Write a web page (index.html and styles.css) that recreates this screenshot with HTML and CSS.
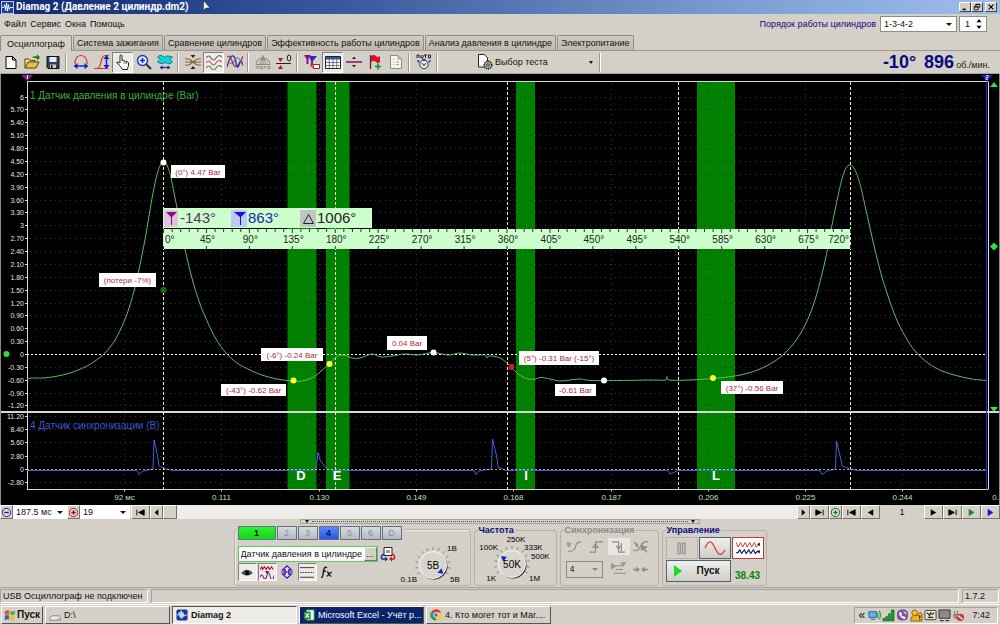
FILE: index.html
```html
<!DOCTYPE html>
<html lang="ru">
<head>
  <meta charset="UTF-8">
  <meta name="viewport" content="width=device-width, initial-scale=1.0">
  <title>Diamag 2</title>
  <link rel="stylesheet" href="styles.css">
</head>
<body>
  <header class="titlebar">
    <svg class="app-icon" viewBox="0 0 14 14"><rect x="0.5" y="0.5" width="13" height="13" fill="#1c3f9c" stroke="#c8d4f4"/><path d="M1 7h2l1-3 1 6 1-8 1 9 1-7 1 5 1-2h3" fill="none" stroke="#fff"/></svg>
    <h1>Diamag 2 (Давление 2 цилиндр.dm2)</h1>
    <div class="window-buttons">
      <button aria-label="Свернуть"><svg viewBox="0 0 10 10"><path d="M2 8h4" stroke="#000" stroke-width="2"/></svg></button>
      <button aria-label="Восстановить"><svg viewBox="0 0 10 10"><path d="M3.5 4V1.5h5v4H7M1.5 4.5h5v4h-5zM1.5 5h5M3.5 2h5" fill="none" stroke="#000"/></svg></button>
      <button class="close" aria-label="Закрыть"><svg viewBox="0 0 10 10"><path d="M2 2l6 6M8 2l-6 6" stroke="#000" stroke-width="1.4"/></svg></button>
    </div>
    <svg class="pointer" viewBox="0 0 8 12"><path d="M0.5 0.5v10l2.500-2.500h4z" fill="#fff" stroke="#222" stroke-width="0.6"/></svg>
  </header>

  <div class="menubar">
    <nav class="menu">
      <a href="#">Файл</a><a href="#">Сервис</a><a href="#">Окна</a><a href="#">Помощь</a>
    </nav>
    <label class="order-label" for="order">Порядок работы цилиндров</label>
    <span class="select order"><select id="order"><option>1-3-4-2</option></select></span>
    <span class="spin">
      <input type="text" value="1" aria-label="Номер цилиндра">
      <svg viewBox="0 0 6 12"><path d="M0 4l3-4 3 4zM0 8l3 4 3-4z"/></svg>
    </span>
  </div>

  <div class="tabs">
    <button class="tab active">Осциллограф</button>
    <button class="tab">Система зажигания</button>
    <button class="tab">Сравнение цилиндров</button>
    <button class="tab">Эффективность работы цилиндров</button>
    <button class="tab">Анализ давления в цилиндре</button>
    <button class="tab">Электропитание</button>
  </div>

  <div class="toolbar">
    <button aria-label="Новый"><svg viewBox="0 0 16 16"><path d="M3 2.500h6.500L13 6v8.500H3zM9.500 2.500V6H13" fill="#fff" stroke="#000"/></svg></button>
    <button aria-label="Открыть"><svg viewBox="0 0 16 16"><path d="M1 14V5h4l1 1.500h5V9" fill="#ffe38a" stroke="#554400"/><path d="M1 14l3-6h11l-3 6z" fill="#e8c050" stroke="#554400"/><path d="M8 4q2-3 5-1.500V0l3 3.500-3 3V4.500q-3-1-5-.5z" fill="#0a8a1a"/></svg></button>
    <button aria-label="Сохранить"><svg viewBox="0 0 16 16"><path d="M2 2.500h12v12H3l-1-1z" fill="#33415f" stroke="#111"/><path d="M4.500 3h7v5h-7z" fill="#e4ecf8"/><path d="M5 10.500h6V14H5z" fill="#c8ccd0"/><path d="M6 11h1.500v3H6z" fill="#111"/></svg></button>
    <i class="sep"></i>
    <button aria-label="Растянуть по времени"><svg viewBox="0 0 16 16"><path d="M2 10V8Q3 1.500 8 1.500T14 8v2" fill="none" stroke="#e03030" stroke-width="1.200"/><path d="M4 12h8" stroke="#1020c0" stroke-width="1.400"/><path d="M0.500 12l4-3v6zM15.500 12l-4-3v6z" fill="#1020c0"/></svg></button>
    <button aria-label="Растянуть по амплитуде"><svg viewBox="0 0 16 16"><path d="M0 14.500h3Q6 14 7 8t4-6.500h4M3 14.500h11" fill="none" stroke="#e03030" stroke-width="1.200"/><path d="M12.500 4v8" stroke="#1020c0" stroke-width="1.500"/><path d="M12.500 1l3 4h-6zM12.500 15l3-4h-6z" fill="#1020c0"/></svg></button>
    <button class="pressed" aria-label="Рука"><svg viewBox="0 0 16 16"><path d="M5 9V2q0-1 1-1t1 1v4.500q1.500-.8 2 .5 1.500-.5 2 .7 2-.5 2.500 1.300V12q-1 1-1 3.500H7.500Q6.500 13 1.500 8.500q.5-1.500 3.500.5z" fill="#fff" stroke="#111" stroke-width="0.900"/><path d="M9 7.500v2M11 8v2" stroke="#111" stroke-width="0.700"/></svg></button>
    <button aria-label="Масштаб"><svg viewBox="0 0 16 16"><path d="M10 10l5 5" stroke="#333" stroke-width="2.200"/><circle cx="6.500" cy="6.500" r="5" fill="#dff0ff" stroke="#2038b0" stroke-width="1.400"/><path d="M4 6.500h5M6.500 4v5" stroke="#1020c0" stroke-width="1.500"/></svg></button>
    <button aria-label="Наложение"><svg viewBox="0 0 16 16"><path d="M0.500 3Q3 0 5.500 2T8 3t2.500-1 5 1L13 5.500 15.500 8Q13 11 10.500 9.500T8 8.500t-2.500 1-5-1.500L3 5.500z" fill="#18d0d8" stroke="#087880" stroke-width="0.900"/><path d="M5 13.500h6" stroke="#10308a" stroke-width="1.200"/><path d="M2.500 13.500l3-2v4zM13.500 13.500l-3-2v4z" fill="#10308a"/></svg></button>
    <i class="sep"></i>
    <button aria-label="Совместить"><svg viewBox="0 0 16 16"><path d="M0 5q4-1 8 3t8 3M0 11q4 1 8-3t8-3M0 8h16" fill="none" stroke="#8a6236" stroke-width="1.100"/><path d="M5.500 1h5L8 4zM5.500 15h5L8 12z" fill="#222"/></svg></button>
    <button class="pressed" aria-label="Раздельно"><svg viewBox="0 0 16 16"><path d="M0 4q2.500-4 5 0t5 0 6-1" fill="none" stroke="#666" stroke-width="1.200"/><path d="M0 9q2.500-4 5 0t5 0 6-1" fill="none" stroke="#d85050" stroke-width="1.200"/><path d="M0 14q2.500-4 5 0t5 0 6-1" fill="none" stroke="#4a8a58" stroke-width="1.200"/></svg></button>
    <button aria-label="Вместе"><svg viewBox="0 0 16 16"><path d="M0 3q3-3 5 4t5 5 6-10" fill="none" stroke="#d82030" stroke-width="1.300"/><path d="M0 13q3-12 6-11 2 0 3 7 1 7 3 2 2-8 4 1" fill="none" stroke="#2030d0" stroke-width="1.300"/><path d="M1 7q4 6 7-1t8 6" fill="none" stroke="#5a7080"/></svg></button>
    <i class="sep"></i>
    <button aria-label="Авто" disabled><svg viewBox="0 0 16 16"><path d="M1 11a7 7 0 1 1 14 0M8 2v8M5 10l3-8 3 8M1 10.500h14" fill="none" stroke="#8c8a84" stroke-width="1.100"/><path d="M2 15v-3h2v3M6 12v3h1.500v-3M9 12.500h2.500M10.300 12.500V15M13 12.500h2v2h-2z" fill="none" stroke="#8c8a84" stroke-width="0.900"/></svg></button>
    <button aria-label="Обнулить"><svg viewBox="0 0 16 16"><path d="M0 9.500h15" stroke="#222"/><path d="M2 4h5L4.500 8z" fill="#c01818"/><path d="M2 15h5l-2.500-4z" fill="#c01818"/><ellipse cx="13" cy="4" rx="1.800" ry="3" fill="none" stroke="#222"/></svg></button>
    <i class="sep"></i>
    <button aria-label="Маркеры"><svg viewBox="0 0 16 16"><path d="M0 1h7L4.500 5v5h-2V5z" fill="#8a1090"/><path d="M5 2h8L9 7v4H7V7z" fill="#2030c8"/><path d="M8 7q-2 6 1 6" fill="none" stroke="#d02030" stroke-width="1.400"/><path d="M9.500 10.500h6v4h-6z" fill="#fff" stroke="#a02030"/></svg></button>
    <button class="pressed" aria-label="Таблица"><svg viewBox="0 0 16 16"><path d="M0.500 2.500h15v12H.5z" fill="#fff" stroke="#223"/><path d="M1 3h14v2.500H1z" fill="#3458a8"/><path d="M4.300 3v11M8 3v11M11.700 3v11M1 8.500h14M1 11.500h14" stroke="#445" stroke-width="0.700"/></svg></button>
    <button aria-label="Граница"><svg viewBox="0 0 16 16"><path d="M0 8h16" stroke="#8a1870" stroke-width="1.600"/><path d="M6 5l2-2.500L10 5zM6 11l2 2.500 2-2.500z" fill="#222"/></svg></button>
    <button aria-label="Флаг"><svg viewBox="0 0 16 16"><path d="M3.500 1v14" stroke="#333" stroke-width="1.300"/><path d="M4 2q3-2 5 0t4 0v6q-2 2-4 0T4 8z" fill="#d81020"/><path d="M8 12.500h6M11 9.500v6" stroke="#149020" stroke-width="1.600"/></svg></button>
    <button aria-label="Отчёт"><svg viewBox="0 0 16 16"><path d="M2.500 1.500H10L13.500 5v9.500h-11z" fill="#f4f4f0" stroke="#8c8a84"/><path d="M10 1.500V5h3.500" fill="none" stroke="#8c8a84"/><path d="M5 5.500h1M5 8h1M5 10.500h1M8 8h3M8 10.500h3" stroke="#a8a6a0"/></svg></button>
    <i class="sep"></i>
    <button aria-label="Автонастройка"><svg viewBox="0 0 16 16"><path d="M1 4V1h2v3M5 1v3h2V1M8 1h3M9.500 1v3M12.500 1h2v3h-2z" fill="none" stroke="#222"/><circle cx="8" cy="10.500" r="4.200" fill="#e8eef4" stroke="#333"/><path d="M6 9l2 3 2-3" fill="none" stroke="#333"/><path d="M1 6l3 1-2 2zM15 6l-3 1 2 2zM6 5h4L8 7z" fill="#2030b8"/></svg></button>
    <i class="sep"></i>
    <button class="test-pick">
      <svg viewBox="0 0 16 16"><path d="M1.500.5h6L10.500 4v9h-9z" fill="#fff" stroke="#222"/><circle cx="11" cy="11" r="3.800" fill="#bbb" stroke="#222" stroke-dasharray="1.500 0.700" stroke-width="1.500"/><circle cx="11" cy="11" r="1.300" fill="#fff" stroke="#222"/></svg>
      <span>Выбор теста</span>
      <i class="caret"></i>
    </button>
    <i class="sep"></i>
    <div class="readout"><b>-10°</b><b>896</b><span>об./мин.</span></div>
  </div>

  <svg class="scope" id="scope" viewBox="0 74 1000 431" role="img" aria-label="Осциллограмма"></svg>

  <div class="timebar">
    <button aria-label="Уменьшить"><svg viewBox="0 0 12 12"><circle cx="6" cy="6" r="4.500" fill="#d8d8f0" stroke="#202060"/><path d="M3.500 6h5" stroke="#202060" stroke-width="1.500"/></svg></button>
    <span class="select span"><select aria-label="Длительность"><option>187.5 мс</option></select></span>
    <button aria-label="Увеличить"><svg viewBox="0 0 12 12"><circle cx="6" cy="6" r="4.500" fill="#f8e0e0" stroke="#802020"/><path d="M3.500 6h5M6 3.500v5" stroke="#901010" stroke-width="1.500"/></svg></button>
    <span class="select zoom"><select aria-label="Масштаб"><option>19</option></select></span>
    <button class="wide" aria-label="В начало"><svg viewBox="0 0 12 12"><path d="M2 3v6M10 3v6L4 6z" fill="#000" stroke="#000"/></svg></button>
    <button aria-label="Влево"><svg viewBox="0 0 12 12"><path d="M8 2.500v7L4 6z"/></svg></button>
    <div class="track"><i class="thumb"></i></div>
    <button aria-label="Вправо"><svg viewBox="0 0 12 12"><path d="M4 2.500v7L8 6z"/></svg></button>
    <button class="wide" aria-label="В конец"><svg viewBox="0 0 12 12"><path d="M10 3v6M2 3v6l6-3z" fill="#000" stroke="#000"/></svg></button>
    <button aria-label="Добавить"><svg viewBox="0 0 12 12"><circle cx="6" cy="6" r="4.500" fill="#e0f0e0" stroke="#205020"/><path d="M3.500 6h5M6 3.500v5" stroke="#108010" stroke-width="1.500"/></svg></button>
    <button class="wide" aria-label="Первый кадр"><svg viewBox="0 0 12 12"><path d="M2 3v6M10 3v6L4 6z" fill="#000" stroke="#000"/></svg></button>
    <button class="wide" aria-label="Предыдущий кадр"><svg viewBox="0 0 12 12"><path d="M9 2.500v7L3 6z"/></svg></button>
    <output>1</output>
    <button class="wide" aria-label="Следующий кадр"><svg viewBox="0 0 12 12"><path d="M3 2.500v7L9 6z"/></svg></button>
    <button class="wide" aria-label="Последний кадр"><svg viewBox="0 0 12 12"><path d="M10 3v6M2 3v6l6-3z" fill="#000" stroke="#000"/></svg></button>
    <button class="wide" aria-label="Воспроизвести"><svg viewBox="0 0 12 12"><path d="M3 2v8l6-4z" fill="#0a9020"/></svg></button>
    <button class="wide" aria-label="Воспроизвести всё"><svg viewBox="0 0 12 12"><path d="M3 2v8l6-4z" fill="#1010e0"/></svg></button>
  </div>

  <main class="panel">
    <div class="splitter"><i class="caret"></i><i class="dots"></i><i class="caret"></i></div>
    <div class="groups">
      <section class="group channel" aria-label="Канал">
        <div class="channel-tabs">
          <button class="ch one">1</button><button class="ch">2</button><button class="ch">3</button><button class="ch four">4</button><button class="ch">5</button><button class="ch">6</button><button class="ch">D</button>
        </div>
        <div class="channel-body">
          <div class="channel-left">
            <div class="sensor-row">
              <span class="sensor"><input type="text" value="Датчик давления в цилиндре" aria-label="Датчик"><button aria-label="Выбрать датчик">...</button></span>
              <button class="flat" aria-label="Переключить датчик"><svg viewBox="0 0 16 16"><path d="M4 1.500h8v8H4z" fill="#fff" stroke="#222"/><path d="M6 4h4v3H6z" fill="#999"/><path d="M4 8q-4 2-2 5h3" fill="none" stroke="#1828b0" stroke-width="1.400"/><path d="M5 10.500l3 2.500-3 2.500z" fill="#1828b0"/><path d="M12 8q4 2 2 5h-3" fill="none" stroke="#d01818" stroke-width="1.400"/><path d="M12 10.500L9 13l3 2.500z" fill="#d01818"/></svg></button>
            </div>
            <div class="mode-row">
              <button class="pressed" aria-label="Показать"><svg viewBox="0 0 16 16"><path d="M2 9q6-6 12 0-6 5-12 0z" fill="#666" stroke="#222"/><circle cx="8" cy="9" r="2.500"/></svg></button>
              <button class="pressed" aria-label="Фильтр"><svg viewBox="0 0 16 16"><path d="M0 5l2-3 1 3 2-3 2 3 2-3 2 3 2-3 2 3" fill="none" stroke="#b01040" stroke-width="1.300"/><path d="M5.500 7h5L8 10z" fill="#222"/><path d="M0 14q2-5 4 0t4-2 4 2 4-2" fill="none" stroke="#801090" stroke-width="1.200"/></svg></button>
              <button aria-label="Инверсия"><svg viewBox="0 0 16 16"><path d="M8 1l5 4.500h-3v5h3L8 15l-5-4.500h3v-5H3z" fill="#e8dcf0" stroke="#2020b8" stroke-width="1.400"/><path d="M1.500 8h13" stroke="#a01070" stroke-width="1.400"/></svg></button>
              <button class="pressed" aria-label="Линии"><svg viewBox="0 0 16 16"><path d="M0 3h16M0 14h16" stroke="#222"/><path d="M0 8.500h16" stroke="#222" stroke-dasharray="2 1"/></svg></button>
              <button class="fx" aria-label="Функция"><svg viewBox="0 0 16 16"><path d="M8 3q-2.500-1.500-3.500 2L3 13q-.5 1.500-2 1M3 7h4M8 8q2 0 2.500 2.500T13 13M13.500 8Q11 9 8 13" fill="none" stroke="#111" stroke-width="1.500"/></svg></button>
            </div>
          </div>
          <svg class="knob volt" id="knob-volt" viewBox="-34 -24 68 42"></svg>
        </div>
      </section>

      <fieldset class="group freq">
        <legend>Частота</legend>
        <svg class="knob rate" id="knob-rate" viewBox="-34 -30 76 48"></svg>
      </fieldset>

      <fieldset class="group sync" disabled>
        <legend>Синхронизация</legend>
        <div class="sync-grid">
          <button aria-label="По сигналу"><svg viewBox="0 0 16 16"><path d="M1 13h3Q8 13 9 8t6-5M1 3v4M0 5l2 3 2-3z" fill="none" stroke="#8c8a84" stroke-width="1.200"/></svg></button>
          <button aria-label="По фронту"><svg viewBox="0 0 16 16"><path d="M1 14h6V3h8M7 5L4.500 9h5z" fill="none" stroke="#8c8a84" stroke-width="1.200"/></svg></button>
          <button class="lit" aria-label="По спаду"><svg viewBox="0 0 16 16"><path d="M1 3h7v11h7M8 11L5.500 7M8 11l2.500-4M11 4v9" fill="none" stroke="#8c8a84" stroke-width="1.200"/></svg></button>
          <button aria-label="Без синхронизации"><svg viewBox="0 0 16 16"><path d="M0 12q5 2 8-4t8-5" fill="none" stroke="#8c8a84" stroke-width="1.200"/><path d="M1 3l4 3v3zM9 5l2 3 4 .5-3 1.500 3 4-4-3-2 1z" fill="#8c8a84" stroke="#8c8a84"/></svg></button>
          <span class="select sync-ch"><select aria-label="Канал синхронизации"><option>4</option></select></span>
          <button aria-label="Уровень"><svg viewBox="0 0 16 16"><path d="M0 4h9l4 0M3 12h13M5 8h8M11 1h4l-2 3zM1 2v5l3-2.500z" fill="none" stroke="#8c8a84" stroke-width="1.200"/></svg></button>
          <button aria-label="Сжать"><svg viewBox="0 0 16 16"><path d="M0 8h5M16 8h-5" stroke="#8c8a84" stroke-width="1.600"/><path d="M3.500 5v6L7.500 8zM12.500 5v6l-4-3z" fill="#8c8a84"/></svg></button>
        </div>
      </fieldset>

      <fieldset class="group control">
        <legend>Управление</legend>
        <div class="control-grid">
          <button class="pause" aria-label="Пауза" disabled><svg viewBox="0 0 32 22"><path d="M11.500 5.500h3v12h-3zM16.500 5.500h3v12h-3z" fill="#c0beb8" stroke="#8c8a84"/></svg></button>
          <button class="raised" aria-label="Одиночный"><svg viewBox="0 0 32 22"><path d="M5 11C9 2 12 2 16 11s7 9 11 2" fill="none" stroke="#d03030" stroke-width="1.200"/></svg></button>
          <button class="selected" aria-label="Непрерывный"><svg viewBox="0 0 32 22"><path d="M3 5l2 5 3-5 2 5 3-5 2 5 3-5 2 5 3-5 2 5 3-3" fill="none" stroke="#c02828"/><path d="M3 16h2l2-3 2 4 3-4 2 4 3-4 2 4 3-4 2 4 3-3" fill="none" stroke="#182060" stroke-width="1.300"/><path d="M26 7l3-2v4zM26 15l3-2v4z" fill="#111"/></svg></button>
          <button class="raised start"><svg viewBox="0 0 10 14"><path d="M1 1v12l8-6z" fill="#10e020"/></svg>Пуск</button>
          <output class="fps">38.43</output>
        </div>
      </fieldset>
    </div>
  </main>

  <footer class="statusbar">
    <span class="status-text">USB Осциллограф не подключен</span>
    <span class="status-fill"></span>
    <span class="version">1.7.2</span>
  </footer>

  <div class="taskbar">
    <button class="task start-menu"><svg viewBox="0 0 14 14"><path d="M1 2.500q3-2 5.500-.5L6 6.500q-2.500-1-5 .5z" fill="#e85020"/><path d="M7.500 2.500q2.500 1 5.500-.5l-.5 4.500q-2.500 1.500-5 .5z" fill="#50b030"/><path d="M1 8q2.500-1.500 5-.5l-.5 5q-2-1-4.500.5z" fill="#3060d0"/><path d="M7 8q2.500 1 5 0l-.5 4.500q-2.500 1.500-5 .5z" fill="#f0c020"/></svg>Пуск</button>
    <button class="task"><svg viewBox="0 0 14 14"><path d="M1 10l3-2h8l1.500 2v3H1z" fill="#eee" stroke="#777"/><path d="M10 11.500h2" stroke="#20a020"/></svg>D:\</button>
    <button class="task current"><svg viewBox="0 0 14 14"><rect x="0.500" y="0.500" width="13" height="13" rx="2" fill="#123a9c"/><path d="M1 7h2l1-3 1 6 1-8 1 9 1-7 1 5 1-2h3" fill="none" stroke="#fff"/></svg>Diamag 2</button>
    <button class="task alert"><svg viewBox="0 0 14 14"><path d="M4 1h9v12H4z" fill="#f4faf4" stroke="#2a8a40"/><path d="M1 3h8v9H1z" fill="#1f8a3c"/><path d="M3 5l4 5M7 5l-4 5" stroke="#fff" stroke-width="1.400"/></svg><span>Microsoft Excel - Учёт р...</span></button>
    <button class="task"><svg viewBox="0 0 14 14"><path d="M7 7L1.400 3.500A6.500 6.500 0 0 1 12.800 4H7z" fill="#e03a2c"/><path d="M7 7l5.800-3A6.500 6.500 0 0 1 7 13.500z" fill="#f8cc20"/><path d="M7 7v6.500A6.500 6.500 0 0 1 1.400 3.500z" fill="#20a050"/><circle cx="7" cy="7" r="2.800" fill="#3a78e8" stroke="#fff"/></svg><span>4. Кто могет тот и Маг....</span></button>
    <div class="tray">
      <span>«</span>
      <svg viewBox="0 0 14 14"><path d="M1 3h8v6H1zM3 11h5" fill="#60b8f0" stroke="#305880"/><path d="M10 4q2 3 0 6M12 2q3 5 0 9" fill="none" stroke="#20a030" stroke-width="1.200"/></svg>
      <svg viewBox="0 0 14 14"><path d="M1 10h2v3H1zM4 8h2v5H4zM7 5h2v8H7zM10 1h3v12h-3z" fill="#10a020" stroke="#064a0c" stroke-width="0.500"/></svg>
      <svg viewBox="0 0 14 14"><rect x="1" y="0.500" width="12" height="12" rx="5" fill="#7b519d"/><path d="M4 3.500q-1 3 1.500 5t4 2l.5-1.500-2-1-1 .5-1.500-2 .8-1-1-2zM8 3q3 0 3 3" fill="#fff" stroke="#fff" stroke-width="0.600"/></svg>
      <svg viewBox="0 0 14 14"><circle cx="5" cy="4" r="3" fill="#f0c040" stroke="#8a6410"/><path d="M1 12q0-5 4-5h4v-2q2-3 4 0v8H1z" fill="#f0b020" stroke="#8a6410"/><path d="M10.500 7v3M10.500 11v1" stroke="#222" stroke-width="1.400"/></svg>
      <svg viewBox="0 0 14 14"><rect x="1" y="1.500" width="12" height="10" rx="1" fill="#f0ecc8" stroke="#333"/><path d="M3 4l3 3 1-3 2 2 2-2M4 9h6" fill="none" stroke="#222" stroke-width="1.200"/></svg>
      <svg viewBox="0 0 14 14"><path d="M1 1h12v9H1z" fill="#8a8a8a" stroke="#333"/><path d="M2 12.500h4M8 12.500h4" stroke="#333" stroke-width="1.500"/></svg>
      <svg viewBox="0 0 14 14"><path d="M3 2v4M6 2v4M2 6h6v3q-3 3-6 0z" fill="#999" stroke="#777"/><circle cx="9" cy="9" r="4" fill="#d83030"/><path d="M6.500 7l5 4" stroke="#fff" stroke-width="1.500"/></svg>
      <time>7:42</time>
    </div>
  </div>
  <script src="script.js"></script>
</body>
</html>
```
FILE: styles.css
```css
:root {
  --face: #d4d0c8;
  --shade: #808080;
  --navy: #0a0a80;
}

* {
  box-sizing: border-box;
}

body {
  margin: 0;
  min-height: 100vh;
  display: flex;
  flex-direction: column;
  background: var(--face);
  color: #111;
  font: 9px/12px "Liberation Sans", Arial, sans-serif;
}

button,
input,
select {
  font: inherit;
  color: inherit;
  margin: 0;
  padding: 0;
  border: 0;
  border-radius: 0;
  background: none;
}

button {
  display: flex;
  align-items: center;
  justify-content: center;
}

svg {
  display: block;
  flex: none;
}

/* title bar */
.titlebar {
  position: relative;
  height: 14px;
  display: flex;
  align-items: center;
  padding: 0 3px 0 1px;
  background: linear-gradient(90deg, #0f2a72, #3a5a9e 35%, #7da0d4 75%, #9dbdec);
  color: #fff;
}

.app-icon {
  width: 13px;
  height: 13px;
}

.titlebar h1 {
  flex: 1;
  margin: 0 0 0 2px;
  font-family: Roboto, "Liberation Sans", sans-serif;
  font-size: 10px;
  line-height: 14px;
}

.pointer {
  position: absolute;
  left: 203px;
  top: 0;
  width: 8px;
  height: 12px;
}

.window-buttons {
  display: flex;
}

.window-buttons button {
  width: 12px;
  height: 10px;
  background: var(--face);
  border: 1px solid;
  border-color: #fff #444 #444 #fff;
}

.window-buttons .close {
  margin-left: 2px;
}

.window-buttons svg {
  width: 8px;
  height: 8px;
}

/* menu */
.menubar {
  height: 21px;
  display: flex;
  align-items: center;
  padding: 0 13px 2px 4px;
}

.menu {
  flex: 1;
  display: flex;
  gap: 4px;
}

.menu a {
  color: inherit;
  text-decoration: none;
}

.order-label {
  color: var(--navy);
  margin-right: 4px;
}

.select {
  position: relative;
  display: flex;
  background: #fff;
}

.select::after {
  content: "";
  position: absolute;
  right: 4px;
  top: 50%;
  margin-top: -1px;
  border: 3px solid transparent;
  border-top-color: #111;
  border-bottom: 0;
}

.select select {
  appearance: none;
  width: 100%;
  padding: 0 3px;
}

.order {
  width: 77px;
  height: 16px;
  border: 1px solid #8f8c84;
  margin-right: 2px;
}

.spin {
  width: 28px;
  height: 16px;
  display: flex;
  align-items: center;
  background: #fff;
  border: 1px solid #8f8c84;
}

.spin input {
  width: 16px;
  padding-left: 5px;
}

.spin svg {
  width: 6px;
  height: 10px;
}

/* tabs */
.tabs {
  height: 16px;
  display: flex;
  align-items: flex-end;
  gap: 1px;
  border-bottom: 1px solid #9a978f;
}

.tab {
  height: 15px;
  padding: 0 3px;
  border: 1px solid #8f8c84;
  border-bottom: 0;
  border-radius: 2px 2px 0 0;
  background: linear-gradient(#d0ccc3, #bdb9af);
}

.tab.active {
  height: 16px;
  padding: 0 6px;
  margin-bottom: -1px;
  background: var(--face);
}

/* toolbar */
.toolbar {
  height: 23px;
  display: flex;
  align-items: center;
  border-bottom: 1px solid #a5a29a;
}

.toolbar button {
  width: 21px;
  height: 21px;
}

.toolbar svg {
  width: 16px;
  height: 16px;
}

.pressed {
  background: #eeece8;
  border: 1px solid;
  border-color: var(--shade) #fff #fff var(--shade);
}

.sep {
  width: 2px;
  height: 19px;
  margin: 0 3px 0 2px;
  background: linear-gradient(90deg, #9a978f 50%, #fff 50%);
}

.toolbar .test-pick {
  width: 120px;
  margin-left: 36px;
  justify-content: flex-start;
  gap: 2px;
}

.test-pick .caret {
  margin-left: auto;
  margin-right: 4px;
}

.caret {
  border: 2px solid transparent;
  border-top: 3px solid #111;
  border-bottom: 0;
}

.readout {
  margin-left: auto;
  padding-right: 10px;
  display: flex;
  align-items: baseline;
  color: var(--navy);
}

.readout b {
  font-size: 18px;
  line-height: 20px;
  margin-right: 8px;
}

.readout b + b {
  margin-right: 2px;
}

.readout span {
  color: #222;
}

/* oscilloscope screen */
.scope {
  width: 100%;
  height: auto;
  background: #000;
}

.scope .grid {
  stroke: #343434;
  stroke-dasharray: 1 4;
}

.scope .axis {
  stroke: #d8d8d8;
}

.scope .zone {
  fill: #008200;
}

.scope .phase {
  stroke: #f4f4c0;
  stroke-dasharray: 3 2;
}

.scope .zero {
  stroke: #fff;
  stroke-dasharray: 2 2;
}

.scope .scale {
  font-size: 7px;
  fill: #e4e4e4;
}

.scope .time {
  font-size: 8px;
  fill: #b8e0b8;
}

.scope .pressure {
  fill: none;
  stroke: #62b862;
}

.scope .sync-wave {
  fill: none;
  stroke: #4460d8;
}

.scope .name {
  font-size: 10px;
}

.scope .note {
  font-size: 8px;
  fill: #b02838;
}

.scope .letter {
  font-size: 13px;
  font-weight: bold;
  fill: #fff;
}

.scope .ruler {
  fill: #ccffcc;
}

.scope .degree {
  font-size: 10px;
  fill: #222;
}

.scope .reading {
  font-size: 15px;
}

/* time navigation */
.timebar {
  height: 14px;
  display: flex;
}

.timebar button {
  width: 13px;
  border: 1px solid;
  border-color: #fff #77746c #77746c #fff;
}

.timebar .wide {
  width: 19px;
}

.timebar svg {
  width: 11px;
  height: 11px;
}

.span {
  width: 54px;
}

.zoom {
  width: 50px;
  margin-right: 1px;
}

.track {
  flex: 1;
  background: #eeece8;
}

.thumb {
  display: block;
  width: 14px;
  height: 14px;
  background: var(--face);
  border: 1px solid;
  border-color: #fff #77746c #77746c #fff;
}

.timebar output {
  width: 44px;
  line-height: 14px;
  text-align: center;
}

/* control panel */
.panel {
  flex: 1;
  display: flex;
  flex-direction: column;
  align-items: center;
  border-bottom: 1px solid #a5a29a;
}

.splitter {
  width: 40%;
  height: 5px;
  display: flex;
  align-items: center;
  gap: 3px;
  padding: 0 4px;
  border: 1px solid #a5a29a;
}

.dots {
  flex: 1;
  border-top: 1px dotted #555;
}

.groups {
  display: flex;
  align-items: flex-end;
  gap: 3px;
  margin-top: 2px;
}

.group {
  min-width: 0;
  height: 57px;
  margin: 0;
  padding: 0 3px;
  border: 1px solid #b5b2aa;
  border-radius: 3px;
  box-shadow: inset 1px 1px #eceae4;
}

legend {
  padding: 0 1px;
  font-weight: bold;
  font-size: 9px;
  line-height: 8px;
  color: var(--navy);
}

fieldset.group {
  height: 60px;
  box-shadow: none;
}

.channel {
  width: 237px;
}

.channel-tabs {
  display: flex;
  gap: 1px;
  width: 167px;
  margin-top: -4px;
  background: var(--face);
}

.ch {
  width: 20px;
  height: 14px;
  border: 1px solid #5c7488;
  background: linear-gradient(#d8dcde, #b4bac0);
  color: #8c9094;
}

.ch.one {
  width: 38px;
  background: linear-gradient(#30f030, #10d818);
  color: #111;
  font-weight: bold;
}

.ch.four {
  background: linear-gradient(#5c88f8, #2458e8);
  color: #0a1860;
  font-weight: bold;
}

.channel-body {
  display: flex;
  justify-content: space-between;
}

.sensor-row {
  display: flex;
  align-items: center;
  margin-top: 6px;
  gap: 2px;
}

.sensor {
  width: 140px;
  height: 16px;
  display: flex;
  background: #fff;
  border: 1px solid #58d058;
}

.sensor input {
  flex: 1;
  min-width: 0;
  padding-left: 2px;
}

.sensor button {
  width: 13px;
  background: var(--face);
  border: 1px solid;
  border-color: #fff #77746c #77746c #fff;
  line-height: 6px;
}

.flat svg {
  width: 16px;
  height: 16px;
}

.mode-row {
  display: flex;
  gap: 1px;
  margin-top: 1px;
}

.mode-row button {
  width: 19px;
  height: 18px;
}

.mode-row svg {
  width: 14px;
  height: 14px;
}

.knob {
  font-size: 8px;
}

.knob .value {
  font-size: 10px;
}

.volt {
  width: 68px;
  height: 42px;
  margin-top: 1px;
}

.rate {
  width: 76px;
  height: 48px;
}

.freq {
  width: 83px;
}

.sync {
  width: 99px;
}

.sync legend {
  color: #8c8a84;
}

.sync-grid {
  display: grid;
  grid-template-columns: repeat(4, 22px);
  grid-template-rows: 24px 22px;
  align-items: center;
}

.sync-grid button {
  height: 17px;
}

.sync-grid svg {
  width: 15px;
  height: 15px;
}

.sync-grid .lit {
  background: #e8e6e0;
}

.sync-ch {
  grid-column: span 2;
  width: 37px;
  height: 17px;
  margin-left: 2px;
  background: none;
  border: 1px solid #8c8a84;
}

.sync-ch::after {
  border-top-color: #8c8a84;
}

.sync-ch select {
  opacity: 1;
  color: #222;
}

.control {
  width: 105px;
}

.control-grid {
  display: grid;
  grid-template-columns: repeat(3, 32px);
  gap: 1px;
  margin-top: 3px;
}

.control-grid button {
  height: 22px;
}

.control-grid .pause {
  border: 1px solid #b5b2aa;
}

.control-grid .raised {
  border: 1px solid #4c6478;
  background: linear-gradient(#f0f0ee, #cfccc4);
}

.control-grid .selected {
  border: 1px solid #c83838;
  background: #fff;
}

.control-grid .pause svg,
.control-grid .selected svg,
.control-grid .raised svg {
  width: 30px;
  height: 20px;
}

.control-grid .start {
  grid-column: span 2;
  justify-content: flex-start;
  gap: 14px;
  padding-left: 6px;
  font-size: 10px;
  font-weight: bold;
}

.control-grid .start svg {
  width: 10px;
  height: 14px;
}

.fps {
  align-self: end;
  text-align: center;
  font-size: 10px;
  font-weight: bold;
  color: #108010;
}

/* status bar */
.statusbar {
  height: 16px;
  display: flex;
  gap: 3px;
  padding: 1px 1px 1px 0;
}

.statusbar span {
  padding: 0 2px;
  line-height: 12px;
  border: 1px solid;
  border-color: #a5a29a #fff #fff #a5a29a;
}

.status-text {
  width: 148px;
  white-space: nowrap;
}

.status-fill {
  flex: 1;
}

.version {
  width: 37px;
}

/* taskbar */
.taskbar {
  height: 21px;
  display: flex;
  align-items: center;
  gap: 2px;
  padding: 0 2px 0 1px;
  border-top: 1px solid #fff;
}

.task {
  width: 125px;
  height: 18px;
  padding: 0 3px;
  justify-content: flex-start;
  gap: 3px;
  white-space: nowrap;
  border: 1px solid;
  border-color: #fff #55534e #55534e #fff;
}

.task svg {
  width: 12px;
  height: 12px;
}

.task.start-menu {
  width: 42px;
  padding: 0 2px;
  gap: 1px;
  font-size: 10px;
  font-weight: bold;
}

.task.current {
  background: #eeece8;
  border-color: #55534e #fff #fff #55534e;
  font-weight: bold;
}

.task.alert {
  background: #0a246a;
  color: #fff;
}

.tray {
  margin-left: auto;
  height: 17px;
  display: flex;
  align-items: center;
  gap: 1px;
  padding: 0 7px 0 3px;
  border: 1px solid;
  border-color: #a5a29a #fff #fff #a5a29a;
}

.tray span {
  width: 9px;
  font-size: 12px;
}

.tray svg {
  width: 13px;
  height: 13px;
}

.tray time {
  margin-left: 6px;
}
```
FILE: script.js
```js
const NS = 'http://www.w3.org/2000/svg';
const scope = document.getElementById('scope');

function add(parent, tag, attrs, text) {
  const el = document.createElementNS(NS, tag);
  for (const key in attrs) el.setAttribute(key, attrs[key]);
  if (text !== undefined) el.textContent = text;
  parent.appendChild(el);
  return el;
}

function line(cls, x1, y1, x2, y2) {
  return add(scope, 'line', { class: cls, x1, y1, x2, y2 });
}

function label(cls, x, y, text, anchor = 'start', fill) {
  const attrs = { class: cls, x, y, 'text-anchor': anchor };
  if (fill) attrs.fill = fill;
  return add(scope, 'text', attrs, text);
}

// smooth curve through the sample points
function smooth(p) {
  let d = `M${p[0]}`;
  for (let i = 0; i < p.length - 1; i++) {
    const a = p[i - 1] || p[i], b = p[i], c = p[i + 1], e = p[i + 2] || c;
    d += `C${b[0] + (c[0] - a[0]) / 6},${b[1] + (c[1] - a[1]) / 6} ${c[0] - (e[0] - b[0]) / 6},${c[1] - (e[1] - b[1]) / 6} ${c}`;
  }
  return d;
}

const LEFT = 27, RIGHT = 987, TOP = 81.5, MIDDLE = 412, BOTTOM = 489.5, ZERO = 354.5, SYNC_ZERO = 469.5;

// valve zones
[[287.5, 29], [326, 23.5], [516, 19], [697, 38]].forEach(([x, width]) => {
  add(scope, 'rect', { class: 'zone', x, y: 82, width, height: 407 });
});

// pressure scale, 0.30 Bar per step
for (let i = -4; i <= 20; i++) {
  const y = Math.round(ZERO - 0.5 - i * 12.87) + 0.5;
  if (i !== 0) line('grid', LEFT + 3, y, RIGHT - 2, y);
  line('axis', LEFT - 2, y, LEFT, y);
  const v = i * 0.3;
  label('scale', 24, y + 2, i % 10 === 0 ? Math.round(v) : v.toFixed(2), 'end');
}

// sync scale, 2.80 V per step
for (let i = -1; i <= 4; i++) {
  const y = Math.round(SYNC_ZERO - 0.5 - i * 13.3) + 0.5;
  if (i !== 0) line('grid', LEFT + 3, y, RIGHT - 2, y);
  line('axis', LEFT - 2, y, LEFT, y);
  label('scale', 24, y + 2, i === 0 ? '0' : (i * 2.8).toFixed(2), 'end');
}

['92 мс', '0.111', '0.130', '0.149', '0.168', '0.187', '0.206', '0.225', '0.244'].forEach((t, i) => {
  const x = Math.round(124 + i * 97.3) + 0.5;
  line('grid', x, 84, x, BOTTOM);
  line('axis', x, BOTTOM, x, BOTTOM + 2);
  label('time', x, 500, t, 'middle');
});
label('time', 999, 500, '0.', 'end');

line('axis', LEFT, TOP, 988, TOP);
line('axis', LEFT + 0.5, TOP, LEFT + 0.5, BOTTOM);
line('axis', 0, MIDDLE, 1000, MIDDLE).setAttribute('stroke-width', 2);
line('axis', LEFT, BOTTOM, 988, BOTTOM);
line('axis', 988.5, TOP, 988.5, BOTTOM);
add(scope, 'path', { d: `M986.500 ${TOP}V${BOTTOM}`, stroke: '#2a2ac8' });
add(scope, 'path', { d: 'M0.500 74V505M999.500 74V505', stroke: '#8a8a8a' });

line('zero', LEFT, ZERO, RIGHT - 1, ZERO);
[163.5, 335.5, 507.5, 678.5, 850.5].forEach(x => line('phase', x, 82, x, BOTTOM));

const pressure = [
  [27, 378.5], [35, 378], [43, 378], [55, 376.5], [70, 373], [85, 367], [95, 361], [105, 353], [115, 340], [124, 322],
  [130, 305], [135, 287], [141, 260], [146, 234], [150, 210], [154, 188], [158, 171], [161, 164], [163.5, 162],
  [167, 165], [171, 178], [177, 208], [182, 235], [187, 258], [193, 282], [200, 304], [208, 323], [216, 339],
  [226, 353], [237, 363], [250, 370], [262, 375], [277, 379], [293, 381], [302, 381], [312, 378], [320, 372],
  [329, 364], [336, 357], [343, 355], [352, 358], [360, 358], [372, 354], [381, 357], [392, 356], [405, 354],
  [418, 355], [433, 352.5], [448, 355], [460, 353], [472, 355], [485, 355], [487, 358], [489, 356], [495, 356.5],
  [502, 359], [511, 367], [518, 374], [528, 379], [535, 379], [541, 377.5], [550, 379], [560, 381], [570, 380],
  [580, 379], [592, 380.5], [620, 380.5], [650, 380], [665, 380], [667, 376.5], [669, 380], [690, 380], [713, 378.5],
  [728, 377], [745, 374], [760, 369], [775, 361], [786, 352], [797, 339], [807, 321], [815, 300], [822, 274],
  [828, 247], [832, 225], [838, 196], [842, 179], [846, 168], [850.5, 165], [855, 170], [860, 184], [866, 210],
  [872, 237], [880, 270], [888, 296], [896, 318], [905, 336], [915, 351], [928, 363], [942, 371], [958, 376],
  [972, 379], [986, 380.5]
];
add(scope, 'path', { class: 'pressure', d: smooth(pressure) });

const sync = '27,470.5 137,470.5 139,474.5 143,471 153,469 154,440 158,458 159,466 164,468 172,470.5 316,470.5 318,452 320,460 325,467 332,470.5 474,470.5 476,474.5 479,471 491.5,469 492.500,439 497,458 498,467 506,470.5 668,470.5 670,474 678,470.5 820,470.5 822,474.5 827,471 835.500,469 836.500,441 841,460 842,466 850,469 858,470.5 986,470.5';
add(scope, 'polyline', { class: 'sync-wave', points: sync });
line('zero', LEFT, SYNC_ZERO, RIGHT - 1, SYNC_ZERO).setAttribute('stroke-opacity', 0.6);

label('letter', 301, 480, 'D', 'middle');
label('letter', 337, 480, 'E', 'middle');
label('letter', 526, 480, 'I', 'middle');
label('letter', 716, 480, 'L', 'middle');
label('name', 30, 99, '1 Датчик давления в цилиндре (Bar)', 'start', '#38b038');
label('name', 30, 429, '4 Датчик синхронизации (В)', 'start', '#3c58d0');

// degree ruler, 720 degrees between the two peaks
add(scope, 'rect', { class: 'ruler', x: 163, y: 208, width: 209, height: 20 });
add(scope, 'rect', { class: 'ruler', x: 163, y: 229, width: 687, height: 20 });
add(scope, 'rect', { x: 164, y: 210, width: 14, height: 17, fill: '#e0c4dc' });
add(scope, 'rect', { x: 231, y: 210, width: 16, height: 17, fill: '#c0c8f8' });
add(scope, 'rect', { x: 300, y: 210, width: 16, height: 17, fill: '#c4c4c4' });
add(scope, 'path', { d: 'M166 212h11l-5 5v8h-1v-8z', fill: '#80107c' });
add(scope, 'path', { d: 'M234 212h12l-5 5v8h-1v-8z', fill: '#1018b8' });
add(scope, 'path', { d: 'M303.500 223.500h10l-5-9z', fill: 'none', stroke: '#222' });
label('reading', 180, 223, '-143°', 'start', '#58306c');
label('reading', 248, 223, '863°', 'start', '#1828b0');
label('reading', 317, 223, '1006°', 'start', '#222');
for (let deg = 0; deg <= 720; deg += 9) {
  const x = 163.5 + deg * 687 / 720;
  const major = deg % 45 === 0;
  let d = `M${x} 229v${major ? 4 : 3}`;
  if (major) d += `M${x} 249v-3`;
  add(scope, 'path', { d, stroke: '#333' });
  if (!major) continue;
  if (deg === 0) label('degree', 165, 243, '0°');
  else if (deg === 720) label('degree', 849, 243, '720°', 'end');
  else label('degree', x + 1, 243, `${deg}°`, 'middle');
}

// measured points
[
  [163.5, 162.5, '#fff'], [163.5, 290, '#107010'], [293.5, 380.5, '#ffff30'], [329.5, 364, '#ffff30'],
  [433.5, 352.5, '#fff'], [511.5, 367, '#d81820'], [604, 380.5, '#fff'], [713, 378, '#ffff30'], [6.5, 354, '#30e030']
].forEach(([cx, cy, fill]) => add(scope, 'circle', { cx, cy, r: 3, fill }));

[
  [171, 165, 54, 13, '(0°) 4.47 Bar'],
  [99, 273, 57, 14, '(потери -7%)'],
  [261, 348, 62, 13, '(-6°) -0.24 Bar'],
  [221, 384, 65, 12, '(-43°) -0.62 Bar'],
  [387, 336, 40, 14, '0.04 Bar'],
  [519, 351, 80, 14, '(5°) -0.31 Bar (-15°)'],
  [555, 384, 41, 12, '-0.61 Bar'],
  [721, 381, 62, 13, '(37°) -0.56 Bar']
].forEach(([x, y, width, height, text]) => {
  add(scope, 'rect', { x, y, width, height, fill: '#fff' });
  label('note', x + width / 2, y + height / 2 + 3, text, 'middle');
});

// cursor and trigger handles
add(scope, 'path', { d: 'M21 75h12l-6 6z', fill: '#80208c' });
add(scope, 'path', { d: 'M27.500 75v4', stroke: '#fff' });
add(scope, 'path', { d: 'M981 75h12l-6 6z', fill: '#2020d0' });
add(scope, 'path', { d: 'M986 75.500h2v2h-2v2h2', fill: 'none', stroke: '#fff', 'stroke-width': 0.8 });
add(scope, 'path', { d: 'M990 87h8l-4-5zM990 246.500l4-4 4 4-4 4zM990 407h8l-4 5z', fill: '#30e040' });

// rotary knobs
function knob(id, value, pointer, marks) {
  const svg = document.getElementById(id);
  for (let a = -120; a <= 120; a += 20) {
    const r = (a - 90) * Math.PI / 180;
    add(svg, 'line', {
      x1: 15 * Math.cos(r), y1: 15 * Math.sin(r), x2: 18 * Math.cos(r), y2: 18 * Math.sin(r), stroke: '#888'
    });
  }
  add(svg, 'circle', { cx: 1, cy: 1, r: 13.5, fill: '#222' });
  add(svg, 'circle', { r: 13.5, fill: '#d8d5ce', stroke: '#f8f8f4' });
  const p = (pointer - 90) * Math.PI / 180;
  add(svg, 'path', {
    d: 'M-3 2h6l-3-5z', fill: '#1020d0',
    transform: `translate(${10.5 * Math.cos(p)} ${10.5 * Math.sin(p)}) rotate(${pointer})`
  });
  add(svg, 'text', { class: 'value', x: 0, y: 4, 'text-anchor': 'middle' }, value);
  marks.forEach(([x, y, text, anchor]) => add(svg, 'text', { x, y, 'text-anchor': anchor }, text));
}

knob('knob-volt', '5В', 130, [[14, -14, '1В', 'start'], [17, 17, '5В', 'start'], [-16, 17, '0.1В', 'end']]);
knob('knob-rate', '50K', -55, [
  [4, -22, '250K', 'middle'], [-14, -14, '100K', 'end'], [12, -14, '333K', 'start'],
  [19, -5, '500K', 'start'], [17, 17, '1M', 'start'], [-16, 17, '1K', 'end']
]);
```
